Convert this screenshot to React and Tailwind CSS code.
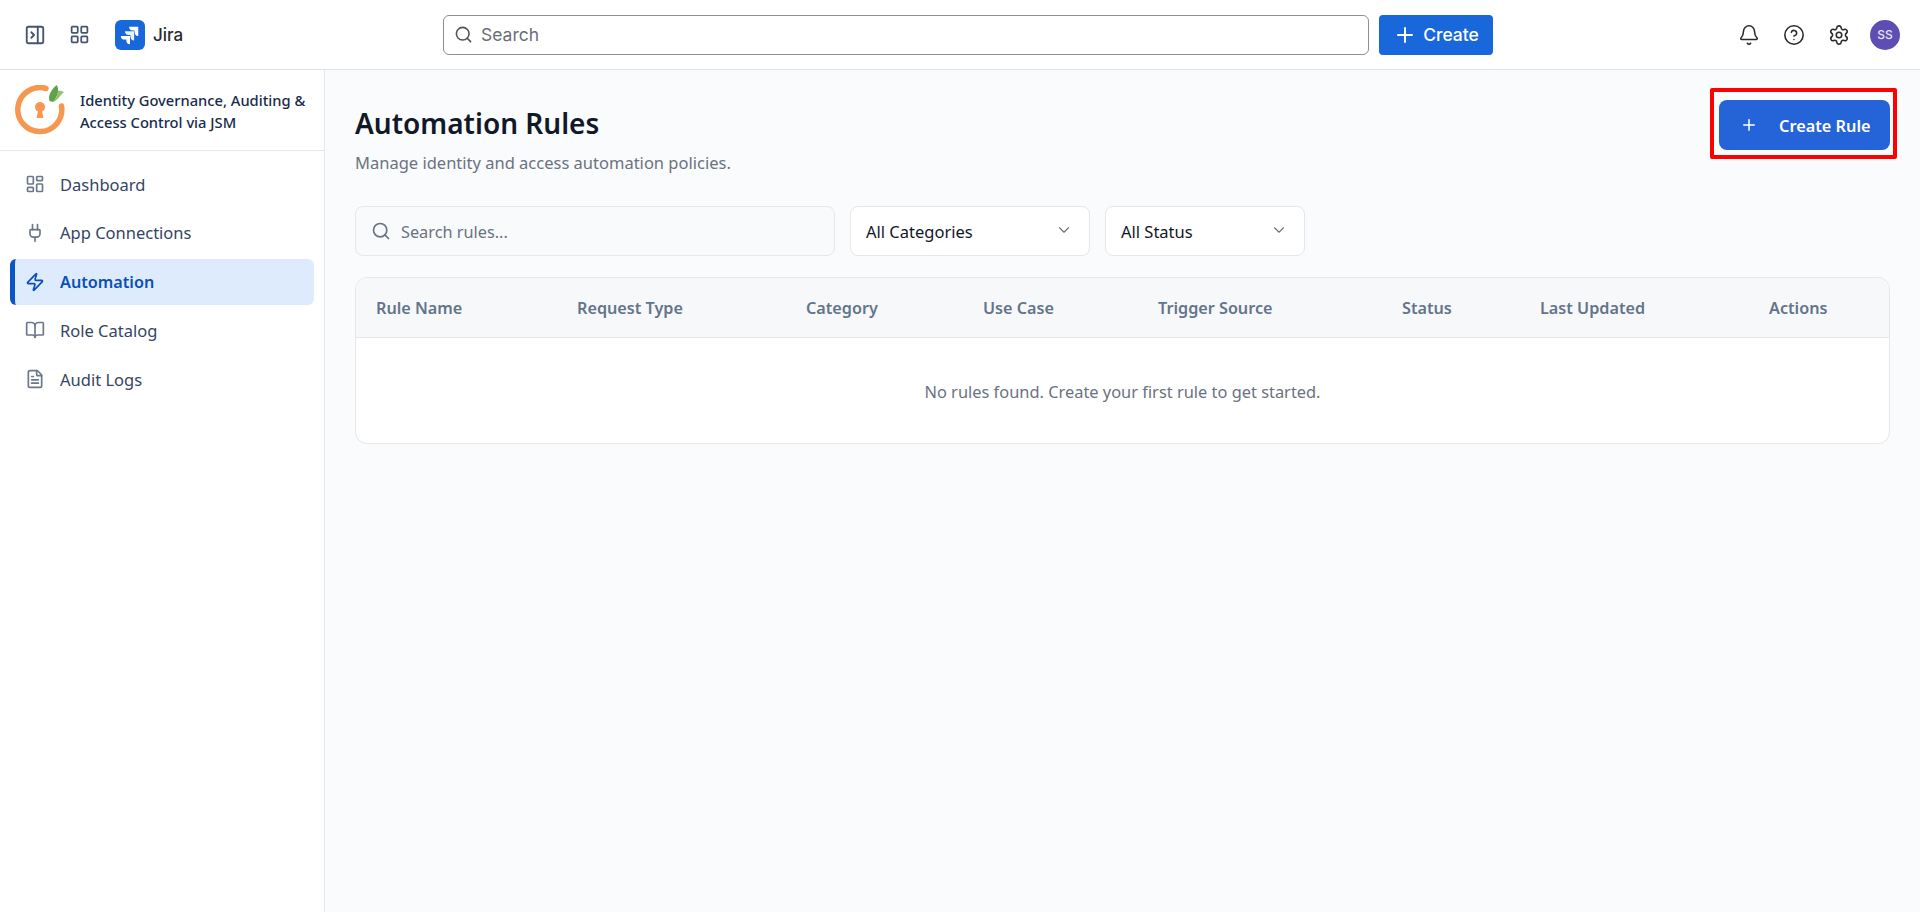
import React from "react";
import {
  PanelRightClose,
  LayoutGrid,
  Search,
  Plus,
  Bell,
  CircleHelp,
  Settings,
  LayoutDashboard,
  Plug,
  Zap,
  BookOpen,
  FileText,
  ChevronDown,
} from "lucide-react";

const navItems = [
  { label: "Dashboard", icon: LayoutDashboard },
  { label: "App Connections", icon: Plug },
  { label: "Automation", icon: Zap, active: true },
  { label: "Role Catalog", icon: BookOpen },
  { label: "Audit Logs", icon: FileText },
];

const columns = [
  "Rule Name",
  "Request Type",
  "Category",
  "Use Case",
  "Trigger Source",
  "Status",
  "Last Updated",
  "Actions",
];

function JiraLogo() {
  return (
    <div className="flex h-[30px] w-[30px] items-center justify-center rounded-[6px] bg-[#1868db]">
      <svg viewBox="0 0 24 24" className="h-[22px] w-[22px]" fill="#fff">
        <path d="M11 3h10v10c-2.500 0-4-1.500-4-4V7h-2c-2.500 0-4-1.500-4-4z" />
        <path d="M6.500 8h10v10c-2.500 0-4-1.500-4-4v-2h-2c-2.500 0-4-1.500-4-4z" opacity="0.9" />
        <path d="M2 13h10v9c-2.500 0-4-1.500-4-4v-1H6c-2.500 0-4-1.500-4-4z" />
      </svg>
    </div>
  );
}

function AppLogo() {
  return (
    <svg viewBox="0 0 50 50" className="h-[50px] w-[50px] shrink-0">
      <path
        d="M31 3.500A22 22 0 1 0 46.500 21"
        fill="none"
        stroke="#f7964f"
        strokeWidth="5.500"
        strokeLinecap="round"
      />
      <circle cx="25" cy="22" r="5" fill="#f7964f" />
      <path d="M23.500 24h3l2 9h-7z" fill="#f7964f" />
      <path d="M34.500 16C32.500 10 37 4 41.700 0c2.300 4 2.300 10-3.700 17z" fill="#5fa24a" />
      <path d="M38 17c4-1 6.500-6 11-10-3-1.500-5-1.500-6.300-.8 0 4-2.200 7.800-4.700 10.800z" fill="#8cc56b" />
    </svg>
  );
}

function TopBar() {
  return (
    <header className="flex h-[70px] shrink-0 items-center border-b border-[#dfe1e6] bg-white pr-[20px] font-['Inter',sans-serif]">
      <div className="flex w-[443px] shrink-0 items-center pl-[24px]">
        <PanelRightClose className="h-[22px] w-[22px] text-[#44546f]" strokeWidth={2} />
        <LayoutGrid className="ml-[23px] h-[21px] w-[21px] text-[#44546f]" strokeWidth={2} />
        <div className="ml-[25px]">
          <JiraLogo />
        </div>
        <span className="ml-[8px] pt-[2px] text-[17px] font-medium text-[#292a2e]">Jira</span>
      </div>
      <div className="flex h-[40px] w-[926px] items-center rounded-[6px] border border-[#8c8f97] bg-white pl-[10px]">
        <Search className="h-[19px] w-[19px] text-[#505258]" strokeWidth={2} />
        <span className="ml-[8px] pt-[2px] text-[17.500px] text-[#6b6e76]">Search</span>
      </div>
      <button className="ml-[10px] flex h-[40px] w-[114px] items-center justify-center gap-[6px] rounded-[4px] bg-[#1868db] text-[17.500px] font-medium text-white">
        <Plus className="h-[24px] w-[24px]" strokeWidth={2} />
        <span className="pt-[2px]">Create</span>
      </button>
      <div className="ml-auto flex items-center">
        <Bell className="h-[22px] w-[22px] text-[#292a2e]" strokeWidth={1.700} />
        <CircleHelp className="ml-[23px] h-[22px] w-[22px] text-[#292a2e]" strokeWidth={1.700} />
        <Settings className="ml-[23px] h-[22px] w-[22px] text-[#292a2e]" strokeWidth={1.700} />
        <div className="ml-[20px] flex h-[30px] w-[30px] items-center justify-center rounded-full bg-[#5e4db2] text-[12px] font-medium text-[#e6e3f5]">
          SS
        </div>
      </div>
    </header>
  );
}

function Sidebar() {
  return (
    <aside className="w-[325px] shrink-0 border-r border-[#e5e7eb] bg-white">
      <div className="flex h-[81px] items-center gap-[15px] border-b border-[#e5e7eb] pl-[15px]">
        <AppLogo />
        <div className="pt-[1px] text-[14.700px] font-medium leading-[22px] text-[#172b4d]">
          Identity Governance, Auditing &amp;
          <br />
          Access Control via JSM
        </div>
      </div>
      <nav className="flex flex-col gap-[2.750px] px-[10px] pt-[10px]">
        {navItems.map((item) => {
          const Icon = item.icon;
          return (
            <div
              key={item.label}
              className={
                item.active
                  ? "flex h-[46px] items-center rounded-[6px] border-l-[5px] border-[#0c55c4] bg-[#deebfc] pl-[10px] text-[16.200px] font-semibold text-[#0c4fb8]"
                  : "flex h-[46px] items-center pl-[15px] text-[16.500px] text-[#344563]"
              }
            >
              <Icon
                className={item.active ? "h-[20px] w-[20px] text-[#0c4fb8]" : "h-[20px] w-[20px] text-[#6b778c]"}
                strokeWidth={2}
              />
              <span className="ml-[15px] pt-[2px]">{item.label}</span>
            </div>
          );
        })}
      </nav>
    </aside>
  );
}

function RulesTable() {
  return (
    <div className="mt-[21px] overflow-hidden rounded-[12px] border border-[#e5e7eb] bg-white">
      <div className="grid h-[60px] grid-cols-[201px_229px_177px_175px_244px_138px_229px_1fr] items-center border-b border-[#e5e7eb] bg-[#f7f8fa]">
        {columns.map((col) => (
          <div key={col} className="pl-[20px] pt-[2px] text-[16.200px] font-semibold text-[#64748b]">
            {col}
          </div>
        ))}
      </div>
      <div className="flex h-[105px] items-center justify-center pt-[3px] text-[16.400px] text-[#6b7280]">
        No rules found. Create your first rule to get started.
      </div>
    </div>
  );
}

export default function App() {
  return (
    <div className="flex h-screen flex-col overflow-hidden bg-white font-['Noto_Sans',sans-serif]">
      <TopBar />
      <div className="flex min-h-0 flex-1">
        <Sidebar />
        <main className="flex-1 bg-[#fafbfd] pl-[30px] pr-[30px] pt-[30px]">
          <div className="flex items-start justify-between">
            <div>
              <h1 className="-mt-[1px] text-[28px] font-semibold leading-[48px] text-[#111827]">Automation Rules</h1>
              <p className="mt-[5px] text-[16.500px] leading-[22px] text-[#6b7280]">
                Manage identity and access automation policies.
              </p>
            </div>
            <div className="relative">
              <button className="flex h-[50px] w-[171px] items-center rounded-[8px] bg-[#2563d9] pl-[21px] text-[16.300px] font-semibold text-white">
                <Plus className="h-[18px] w-[18px]" strokeWidth={2} />
                <span className="ml-[21px] pt-[2px]">Create Rule</span>
              </button>
              <div className="pointer-events-none absolute -bottom-[9px] -left-[9px] -right-[7px] -top-[12px] rounded-[2px] border-[4px] border-[#ff0000]" />
            </div>
          </div>
          <div className="mt-[32px] flex gap-[15px]">
            <div className="flex h-[50px] w-[480px] items-center rounded-[8px] border border-[#e5e7eb] bg-[#f8fafc] pl-[15px]">
              <Search className="h-[20px] w-[20px] text-[#6b7280]" strokeWidth={2} />
              <span className="ml-[10px] pt-[2px] text-[16.300px] text-[#6b7280]">Search rules...</span>
            </div>
            <div className="flex h-[50px] w-[240px] items-center justify-between rounded-[8px] border border-[#e5e7eb] bg-white pl-[15px] pr-[16px] text-[16.500px] text-[#111827]">
              <span className="pt-[2px]">All Categories</span>
              <ChevronDown className="-mt-[2px] h-[18px] w-[18px] text-[#6b7280]" strokeWidth={1.500} />
            </div>
            <div className="flex h-[50px] w-[200px] items-center justify-between rounded-[8px] border border-[#e5e7eb] bg-white pl-[15px] pr-[16px] text-[16.500px] text-[#111827]">
              <span className="pt-[2px]">All Status</span>
              <ChevronDown className="-mt-[2px] h-[18px] w-[18px] text-[#6b7280]" strokeWidth={1.500} />
            </div>
          </div>
          <RulesTable />
        </main>
      </div>
    </div>
  );
}
